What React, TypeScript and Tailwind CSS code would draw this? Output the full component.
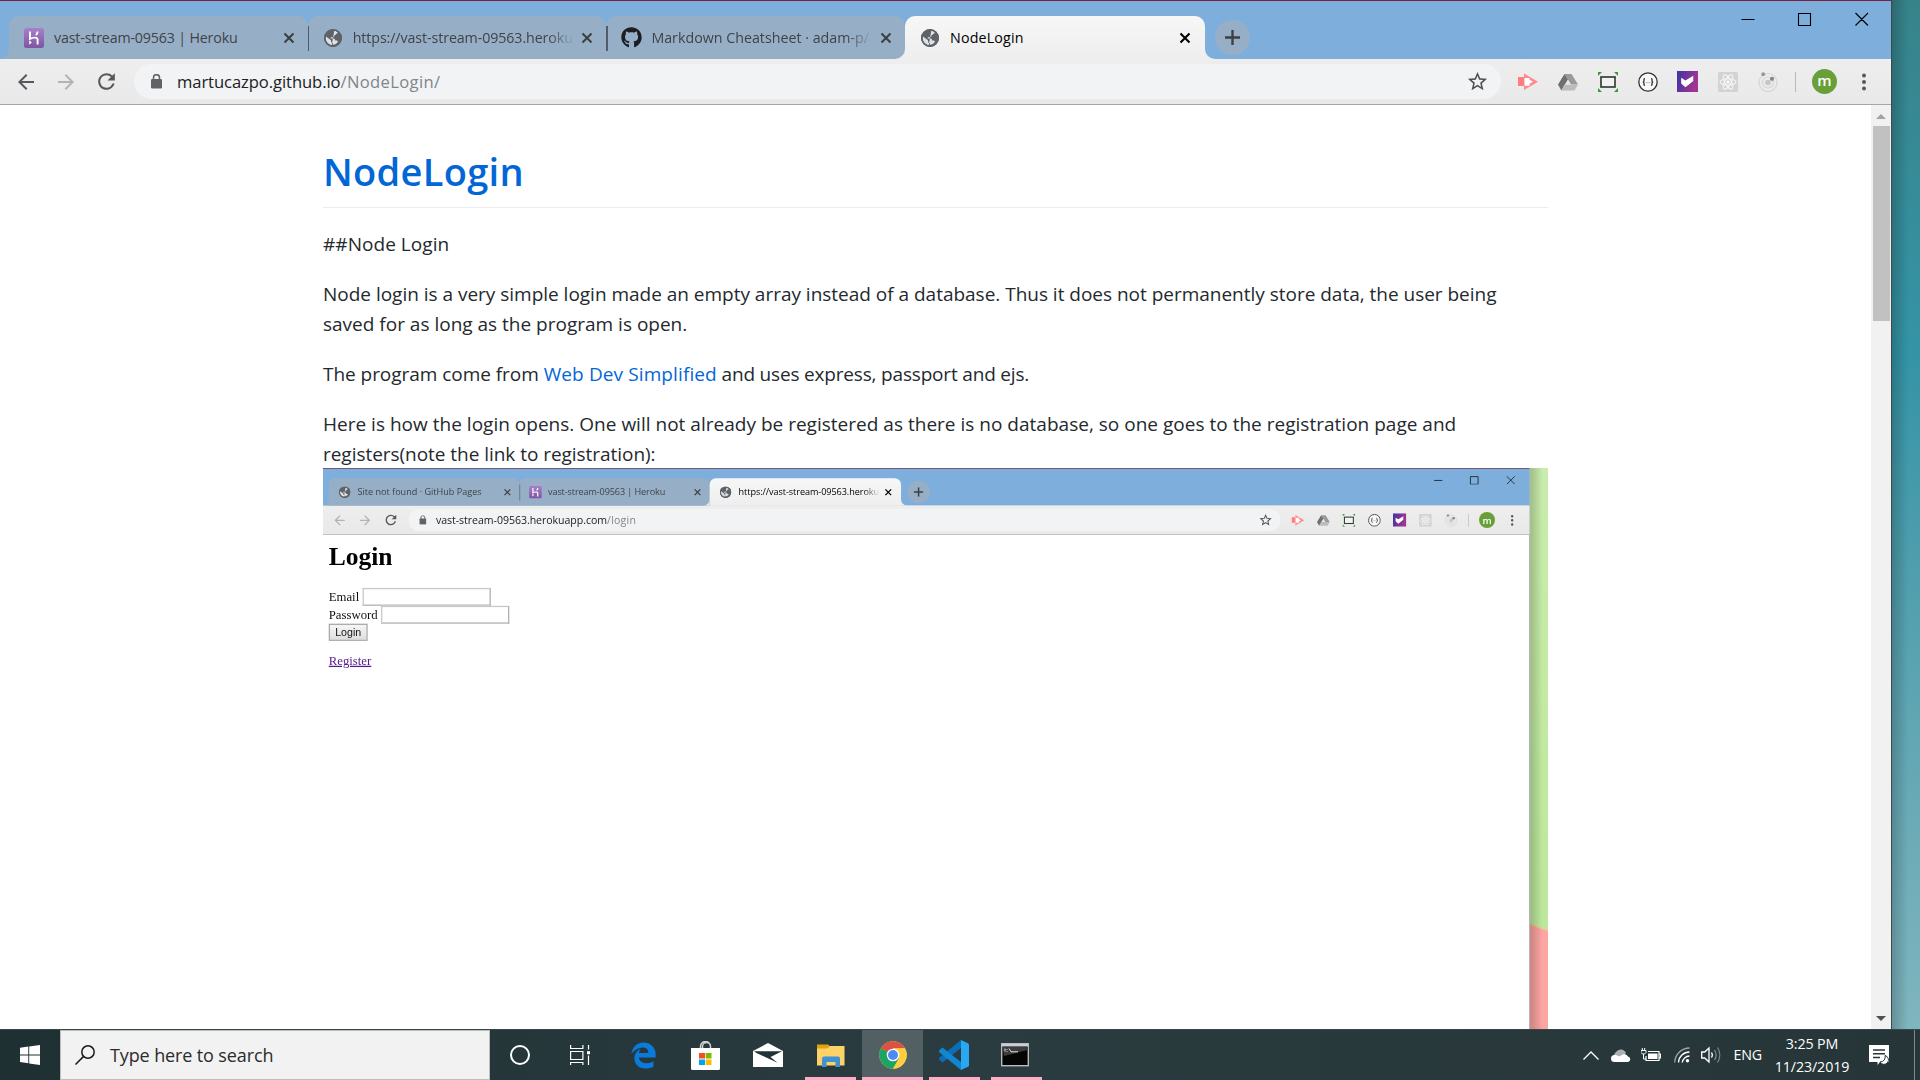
import React from "react";
import { MdArrowBack, MdArrowForward, MdRefresh, MdStarBorder } from "react-icons/md";
import { FaEdgeLegacy, FaGithub } from "react-icons/fa";

function Globe() {
  return (
    <svg viewBox="0 0 18 18" className="size-[18px]">
      <circle cx="9" cy="9" r="9" fill="#5f6368" />
      <path
        d="M10.300 1.800c1.200.2 2.600.8 3.600 1.800-.3.900-.9 1.400-2 1.500-.2 1-.9 1.300-1.700 1.500.3 1-.3 1.500-1.200 1.600H6.800l-.1 1.400h2.800c1.100 0 1.600.7 1.600 1.800h1.100c.9 0 1.500.5 1.700 1.300-1.100 1.800-3 2.900-5.100 3v-1.700c-1.100 0-1.800-.7-1.800-1.800v-.9L2 7.600A7.300 7.300 0 0 0 1.700 9c0 3.600 2.600 6.600 6 7.200"
        fill="#dfe3e7"
      />
      <circle cx="9" cy="9" r="8.200" fill="none" stroke="#5f6368" strokeWidth="1.600" />
    </svg>
  );
}

function Lock() {
  return (
    <svg viewBox="0 0 11 15" className="h-[15px] w-[11px] text-[#5f6368]">
      <rect y="5" width="11" height="9.500" rx="1.200" fill="currentColor" />
      <path d="M2.500 6V3.700a3 3 0 0 1 6 0V6" fill="none" stroke="currentColor" strokeWidth="1.500" />
    </svg>
  );
}

function Heroku() {
  return (
    <svg viewBox="0 0 20 20" className="size-5">
      <defs>
        <linearGradient id="hk" x1="0" y1="0" x2="0" y2="1">
          <stop offset="0" stopColor="#a97fc9" />
          <stop offset="1" stopColor="#7d55a3" />
        </linearGradient>
      </defs>
      <rect width="20" height="20" rx="2.500" fill="url(#hk)" />
      <path d="M6 3.400v7.400c2-.9 6.900-2.300 7.600.4v5.400M13.600 3.400c0 1.500-.7 2.700-1.700 3.700" fill="none" stroke="#fff" strokeWidth="1.900" />
      <path d="M5.200 12.300l2.600 2.200-2.600 2.200z" fill="#fff" />
    </svg>
  );
}

function Cross({ active }: { active?: boolean }) {
  return (
    <svg viewBox="0 0 12 12" className={active ? "size-3 text-black" : "size-3 text-[#3c4043]"}>
      <path d="M1.500 1.500l9 9M10.500 1.500l-9 9" stroke="currentColor" strokeWidth="2.100" />
    </svg>
  );
}

type TabData = {
  icon: React.ReactNode;
  title: string;
  tracking?: string;
  active?: boolean;
  sep?: boolean;
  fade?: boolean;
  flare?: boolean;
};

function Tab({ icon, title, tracking = "", active, sep, fade, flare }: TabData) {
  return (
    <div
      className={
        "relative flex h-[43px] shrink-0 items-center rounded-t-[10px] pl-[14px] " +
        (active
          ? "z-10 w-[300px] bg-linear-to-b from-[#f7f7f7] to-[#eeeeee] pr-[14px] text-black"
          : "w-[298.700px] bg-[#97afc6] pr-[13px] text-[#3f4347]")
      }
    >
      {(active || flare) && (
        <svg viewBox="0 0 10 10" className={"absolute -left-[10px] bottom-0 size-[10px] " + (active ? "text-[#eeeeee]" : "text-[#97afc6]")}>
          <path d="M10 0v10H0a10 10 0 0 0 10-10z" fill="currentColor" />
        </svg>
      )}
      {active && (
        <svg viewBox="0 0 10 10" className="absolute -right-[10px] bottom-0 size-[10px] text-[#eeeeee]">
          <path d="M0 0v10h10a10 10 0 0 1-10-10z" fill="currentColor" />
        </svg>
      )}
      <span className="flex w-[22px] justify-center">{icon}</span>
      <span
        className={
          "ml-[9px] w-[222px] whitespace-pre text-[14.250px] leading-5 " + tracking + (fade ? " mask-r-from-88% mask-r-to-100%" : "")
        }
      >
        {title}
      </span>
      <span className="ml-auto">
        <Cross active={active} />
      </span>
      {sep && <span className="absolute -right-[1.500px] top-[10px] z-10 h-[25px] w-[1.600px] bg-[#4f5d6b]" />}
    </div>
  );
}

function Extensions() {
  return (
    <>
      <svg viewBox="0 0 20 20" className="size-5">
        <path d="M0 5h6v9H0z" fill="#ff7f7f" />
        <path d="M6 1.500L20 9.800 6 18z" fill="#ff8a8a" />
        <path d="M6.500 6h5v1.800l3.500 2-3.500 2v2h-5z" fill="#fff" />
      </svg>
      <svg viewBox="0 0 20 20" className="size-5">
        <path d="M6.500 2h7L20 12.500h-7z" fill="#9a9a9a" />
        <path d="M6.500 2L0 12.500 3.300 18.500 10 7.500z" fill="#6f6f6f" />
        <path d="M6.500 12.500H20l-3.500 6H3.300z" fill="#bcbcbc" />
        <path d="M10 7.800l2.800 4.700H7.200z" fill="#e6e6e6" />
      </svg>
      <svg viewBox="0 0 20 20" className="size-5">
        <rect x="3" y="5" width="14" height="10" fill="#f2f2f2" stroke="#37413c" strokeWidth="1.700" />
        <path d="M0 0h4L0 4zM20 0v4l-4-4zM0 20v-4l4 4zM20 20h-4l4-4z" fill="#3a9a35" />
      </svg>
      <svg viewBox="0 0 20 20" className="size-5">
        <circle cx="10" cy="10" r="9.200" fill="#f8f8f8" stroke="#333" strokeWidth="1.300" />
        <path
          d="M7 6.600c-1.300 0-1 1-1 1.900s-.3 1.500-1.200 1.500c.9 0 1.200.6 1.200 1.500s-.3 1.900 1 1.900M13 6.600c1.300 0 1 1 1 1.900s.3 1.500 1.200 1.500c-.9 0-1.200.6-1.200 1.500s.3 1.900-1 1.900"
          fill="none"
          stroke="#333"
          strokeWidth="1.300"
        />
        <path d="M7.800 10.500h.8M9.600 10.500h.8M11.400 10.500h.8" stroke="#777" strokeWidth="0.900" />
      </svg>
      <svg viewBox="0 0 20 20" className="-mx-[0.500px] size-[21px]">
        <defs>
          <linearGradient id="pv" x1="0" y1="0" x2="1" y2="0.300">
            <stop offset="0" stopColor="#3f32a6" />
            <stop offset="1" stopColor="#a23590" />
          </linearGradient>
        </defs>
        <rect width="20" height="20" fill="url(#pv)" />
        <path d="M4 6.500l4 2.500 7.500-4.500v5L8 15.500 4 12z" fill="#fff" />
      </svg>
      <svg viewBox="0 0 20 20" className="size-5">
        <rect width="20" height="20" rx="1.500" fill="#d3d3d3" />
        <g fill="none" stroke="#f6f6f6" strokeWidth="1.100">
          <ellipse cx="10" cy="10" rx="8" ry="3.200" />
          <ellipse cx="10" cy="10" rx="8" ry="3.200" transform="rotate(60 10 10)" />
          <ellipse cx="10" cy="10" rx="8" ry="3.200" transform="rotate(120 10 10)" />
        </g>
        <circle cx="10" cy="10" r="1.800" fill="#f6f6f6" />
      </svg>
      <svg viewBox="0 0 20 20" className="size-5">
        <g fill="none" stroke="#d6d6d6" strokeWidth="1.200">
          <circle cx="10" cy="10.500" r="9" />
          <circle cx="10" cy="10.500" r="5.500" />
        </g>
        <circle cx="10" cy="10.500" r="2.800" fill="#c6c6c6" />
        <circle cx="5.200" cy="2.300" r="2" fill="#9a9a9a" />
        <circle cx="14" cy="6.800" r="2.100" fill="#858585" />
      </svg>
    </>
  );
}

type ChromeProps = { tabs: TabData[]; back?: boolean; domain: string; path: string };

function Chrome({ tabs, back, domain, path }: ChromeProps) {
  return (
    <div className="w-[1891px]">
      <div className="flex h-[59px] items-start border-t border-[#7a2140] bg-[#7eafdc]">
        <div className="flex pl-[9px] pt-[15px]">
          {tabs.map((t, i) => (
            <Tab key={i} {...t} />
          ))}
        </div>
        <span className="ml-[10px] mt-[19px] flex size-[35px] items-center justify-center rounded-full bg-[#97afc6]">
          <svg viewBox="0 0 14 14" className="size-[15px]">
            <path d="M7 0v14M0 7h14" stroke="#3c4043" strokeWidth="2.200" />
          </svg>
        </span>
        <svg viewBox="0 0 128 14" className="ml-auto mr-[22px] mt-[11px] h-[14px] w-32 shrink-0">
          <path d="M0.500 7.500h13M57.500 1.500h12v12h-12zM114.500 1l12.500 12.500M127 1L114.500 13.500" fill="none" stroke="#000" strokeWidth="1.100" />
        </svg>
      </div>
      <div className="flex h-[46px] items-center border-b border-[#a6a6a6] bg-linear-to-b from-[#eeeeee] to-[#e9e9e9]">
        <div className="flex w-[134px] shrink-0 items-center gap-4 pl-[14px]">
          <MdArrowBack className={back ? "size-6 text-[#55585c]" : "size-6 text-[#b3b3b3]"} />
          <MdArrowForward className="size-6 text-[#b3b3b3]" />
          <MdRefresh className="size-[25px] text-[#55585c]" />
        </div>
        <div className="flex h-[35px] w-[1367px] shrink-0 items-center rounded-full bg-[#f1f3f4] pl-[17px] pr-3">
          <Lock />
          <div className="ml-[15px] text-[16.600px] leading-6">
            <span className="tracking-[-0.080px] text-[#202124]">{domain}</span>
            <span className="tracking-[0.350px] text-[#80868b]">{path}</span>
          </div>
          <MdStarBorder className="ml-auto size-[23px] text-[#4c5054]" />
        </div>
        <div className="ml-[16.500px] flex items-center gap-5">
          <Extensions />
        </div>
        <span className="ml-[17.500px] h-5 w-px bg-[#b8b8b8]" />
        <span className="ml-4 flex size-[25px] items-center justify-center rounded-full bg-[#689f38] pb-0.5 text-[15px] font-semibold text-white">
          m
        </span>
        <svg viewBox="0 0 4 18" className="ml-[25px] h-[18px] w-1">
          <circle cx="2" cy="2.500" r="2" fill="#55585c" />
          <circle cx="2" cy="9" r="2" fill="#55585c" />
          <circle cx="2" cy="15.500" r="2" fill="#55585c" />
        </svg>
      </div>
    </div>
  );
}

const outerTabs: TabData[] = [
  { icon: <Heroku />, title: "vast-stream-09563 | Heroku", tracking: "tracking-[-0.170px]", sep: true, flare: true },
  { icon: <Globe />, title: "https://vast-stream-09563.heroku", tracking: "tracking-[-0.100px]", sep: true, fade: true },
  { icon: <FaGithub className="size-[21px] text-[#1b1f23]" />, title: "Markdown Cheatsheet · adam-p/", fade: true },
  { icon: <Globe />, title: "NodeLogin", tracking: "tracking-[0.150px]", active: true },
];

const innerTabs: TabData[] = [
  { icon: <Globe />, title: "Site not found · GitHub Pages", sep: true, flare: true },
  { icon: <Heroku />, title: "vast-stream-09563 | Heroku", tracking: "tracking-[-0.170px]" },
  { icon: <Globe />, title: "https://vast-stream-09563.heroku", tracking: "tracking-[-0.100px]", active: true, fade: true },
];

function Field({ label }: { label: string }) {
  return (
    <div className="flex items-center gap-[5px]">
      {label}
      <span className="h-[28px] w-[201px] border-2 border-[#b0b0b0] border-l-[#c8c8c8] border-t-[#c8c8c8] bg-white" />
    </div>
  );
}

function LoginShot() {
  return (
    <div className="relative flex h-[561px] w-[1225px] overflow-hidden">
      <div className="h-[1080px] w-[1920px] shrink-0 origin-top-left scale-[0.638]">
        <div className="flex h-full">
          <div className="w-[1892px] shrink-0 border-r border-[#777] bg-white">
            <Chrome tabs={innerTabs} domain="vast-stream-09563.herokuapp.com" path="/login" />
            <div className="px-[9px] pt-[11px] font-['Liberation_Serif',serif] text-[20px] leading-[27.500px] text-[#111]">
              <h1 className="text-[40px] font-bold leading-[46px] text-black">Login</h1>
              <div className="mt-[26px]">
                <Field label="Email" />
                <Field label="Password" />
              </div>
              <button className="flex h-[27px] w-[61px] items-center justify-center border-2 border-[#a8a8a8] bg-linear-to-b from-[#f6f6f6] to-[#dedede] font-['Liberation_Sans',sans-serif] text-[16.670px]">
                Login
              </button>
              <p className="mt-[18px] text-[#551a8b] underline">Register</p>
            </div>
          </div>
          <svg viewBox="0 0 28 1080" preserveAspectRatio="none" className="h-[1080px] w-7 shrink-0">
            <defs>
              <linearGradient id="gr" x1="0" y1="0" x2="0" y2="1">
                <stop offset="0" stopColor="#c8ecab" />
                <stop offset="0.600" stopColor="#bde89c" />
                <stop offset="1" stopColor="#bde89c" />
              </linearGradient>
              <linearGradient id="sh" x1="0" y1="0" x2="1" y2="0">
                <stop offset="0" stopColor="#000" stopOpacity="0.200" />
                <stop offset="0.700" stopColor="#000" stopOpacity="0" />
              </linearGradient>
            </defs>
            <rect width="28" height="1080" fill="url(#gr)" />
            <path d="M0 715l28 10v355H0z" fill="#fda5a1" />
            <path d="M0 715l28 10" stroke="#f3c98e" strokeWidth="2" />
            <rect width="28" height="1080" fill="url(#sh)" />
          </svg>
        </div>
      </div>
    </div>
  );
}

function Scrollbar() {
  return (
    <div className="flex w-5 shrink-0 flex-col items-center bg-[#f1f1f1]">
      <svg viewBox="0 0 10 5" className="mt-[9px] h-[5px] w-[10px]">
        <path d="M5 0l5 5H0z" fill="#a3a3a3" />
      </svg>
      <div className="mt-[7px] h-[195px] w-[17px] bg-[#c1c1c1]" />
      <svg viewBox="0 0 10 5" className="mb-2 mt-auto h-[5px] w-[10px]">
        <path d="M5 5l5-5H0z" fill="#505050" />
      </svg>
    </div>
  );
}

function TaskIcon({ className = "", running, children }: { className?: string; running?: boolean; children: React.ReactNode }) {
  return (
    <div className={"flex h-full flex-col items-center justify-between " + className}>
      <span className="flex h-[47px] items-center pt-[3px]">{children}</span>
      {running && <span className="h-[3px] w-full bg-[#ffacc8]" />}
    </div>
  );
}

function Taskbar() {
  return (
    <div className="flex h-[51px] border-t border-[#35464a] bg-linear-to-r from-[#1e3032] via-[#2a3c3f] to-[#263538] text-white">
      <div className="flex w-[60px] items-center justify-center">
        <svg viewBox="0 0 20 20" className="size-5">
          <path d="M0 2.800l8.300-1.200v7.900H0zM9.200 1.500L20 0v9.500H9.200zM0 10.400h8.300v7.900L0 17.100zM9.200 10.400H20V20L9.200 18.400z" fill="#fff" />
        </svg>
      </div>
      <div className="flex w-[430px] items-center border border-[#bdbdbd] bg-[#f2f2f2] pl-[14px] text-[#2b2b2b]">
        <svg viewBox="0 0 20 20" className="size-5">
          <circle cx="13" cy="7" r="6.200" fill="none" stroke="#1a1a1a" strokeWidth="1.500" />
          <path d="M8.600 11.400L0.500 19.500" stroke="#1a1a1a" strokeWidth="1.500" />
        </svg>
        <span className="ml-[15px] text-[18px] tracking-[-0.120px]">Type here to search</span>
      </div>
      <div className="flex w-[60px] items-center justify-center">
        <span className="size-5 rounded-full border-[2.500px] border-white" />
      </div>
      <div className="flex w-[60px] items-center justify-center">
        <svg viewBox="0 0 20 20" className="size-5">
          <path
            d="M0.600 0v3.500h12.300V0M0.600 6.500h12.300v8H0.600zM0.600 20v-2.500h12.300V20M18.500 0v4.500M18.500 10.500V20"
            fill="none"
            stroke="#fff"
            strokeWidth="1.200"
          />
          <path d="M17 6.200h3v3h-3z" fill="#fff" />
        </svg>
      </div>
      <TaskIcon className="ml-2 w-[51px]">
        <FaEdgeLegacy className="size-[27px] text-[#0a7bdb]" />
      </TaskIcon>
      <TaskIcon className="ml-[11px] w-[51px]">
        <svg viewBox="0 0 29 29" className="size-[29px]">
          <path d="M9.500 8V5.500a5 5 0 0 1 10 0V8M11.500 8V5.500a4 4 0 0 1 8 0" fill="none" stroke="#cfd3d4" strokeWidth="1.500" />
          <path d="M0 7h29v20.500a1.500 1.500 0 0 1-1.500 1.500h-26A1.500 1.500 0 0 1 0 27.500z" fill="#fff" />
          <path d="M8 12h6v5.500H8z" fill="#f25022" />
          <path d="M14.700 12h5.800v5.500h-5.800z" fill="#7fba00" />
          <path d="M8 18.500h6V24H8z" fill="#00a4ef" />
          <path d="M14.700 18.500h5.800V24h-5.800z" fill="#ffb900" />
        </svg>
      </TaskIcon>
      <TaskIcon className="ml-[11px] w-[51px]">
        <svg viewBox="0 0 30 24" className="h-6 w-[30px]">
          <path d="M0 8L15 0l15 8v16H0z" fill="#fff" />
          <path d="M1 8.200h28L17.500 14l7 5.800L3.500 10z" fill="#1f3235" />
        </svg>
      </TaskIcon>
      <TaskIcon running className="ml-3 w-[51px]">
        <svg viewBox="0 0 28 24" className="h-6 w-7">
          <path d="M0 1.500h11L14 4v3H0z" fill="#e3a10c" />
          <path d="M0 5.500h10L13 3h14.500v19.500H0z" fill="#fdd267" />
          <path d="M5 24V15.500a2 2 0 0 1 2-2h14a2 2 0 0 1 2 2V24h-4.500v-5h-9v5z" fill="#3f92d4" />
        </svg>
      </TaskIcon>
      <TaskIcon running className="ml-[6px] w-[61px] bg-[#536063]">
        <svg viewBox="0 0 28 28" className="size-7">
          <circle cx="14" cy="14" r="13.700" fill="#ffcd42" />
          <path d="M14 14L2.130 7.150A13.700 13.700 0 0 1 25.900 7.200H14z" fill="#dd5144" />
          <path d="M14 14L2.130 7.150A13.700 13.700 0 0 0 14 27.700L19.900 17.400z" fill="#1da362" />
          <path d="M14 7.200h11.900a13.700 13.700 0 0 1-12 20.500L19.900 17.400z" fill="#ffcd42" />
          <circle cx="14" cy="14" r="6.300" fill="#fff" />
          <circle cx="14" cy="14" r="5" fill="#4c8bf5" />
        </svg>
      </TaskIcon>
      <TaskIcon running className="ml-[6px] w-[51px]">
        <svg viewBox="0 0 30 30" className="mr-0.5 size-[30px]">
          <path d="M22 0L22 8 3.500 22.500 0 19.500v-1.500z" fill="#0a6fb8" />
          <path d="M0 10.500L3.500 7.500 22 22v8L0 12z" fill="#1087d0" />
          <path d="M22 0l7 3.200A1.800 1.800 0 0 1 30 4.800v20.400a1.800 1.800 0 0 1-1 1.600L22 30z" fill="#28a8f0" />
        </svg>
      </TaskIcon>
      <TaskIcon running className="ml-[11px] w-[51px]">
        <svg viewBox="0 0 28 24" className="mr-[3px] h-6 w-7">
          <rect x="0.700" y="0.700" width="26.600" height="22" fill="#050505" stroke="#b9bdbf" strokeWidth="1.400" />
          <path d="M1 1h26v2.500H1z" fill="#c9cfd4" />
          <path d="M1.500 4h25v3L3 13z" fill="#3c3c3c" />
          <path d="M4 5.500v3M6 6v.8M6 8v.8M8 5.500l2 3.300h7" fill="none" stroke="#dedede" strokeWidth="1" />
        </svg>
      </TaskIcon>
      <div className="ml-auto flex items-center">
        <svg viewBox="0 0 16 9" className="h-[9px] w-4">
          <path d="M0.500 8.500L8 1l7.500 7.500" fill="none" stroke="#fff" strokeWidth="1.300" />
        </svg>
        <svg viewBox="0 0 20 13" className="ml-3 h-[13px] w-5">
          <path d="M4 9a4.500 4.500 0 0 1 1-6A6 6 0 0 1 15 3.500L12 8z" fill="#a9b1b3" />
          <path d="M3.500 13a3.500 3.500 0 0 1 0-7c2 0 3 .5 4.500 1.500L13 5a4.500 4.500 0 0 1 4 2.500A2.800 2.800 0 0 1 17 13z" fill="#fff" />
        </svg>
        <svg viewBox="0 0 20 14" className="ml-[10px] h-[14px] w-5">
          <path d="M5 8v4.500h13V3.500H7M18.500 6h1v4h-1" fill="none" stroke="#fff" strokeWidth="1.200" />
          <path d="M7 5.500h9.500v5.500H7z" fill="#fff" />
          <path d="M0 2.500h5v2L3.500 6h-2L0 4.500zM1.300 0v2.500M3.700 0v2.500M2.500 6v5H5" fill="none" stroke="#fff" strokeWidth="1" />
        </svg>
        <svg viewBox="0 0 16 16" className="ml-[13px] size-4">
          <g fill="none" strokeWidth="1.300">
            <path d="M0.700 15.500A15 15 0 0 1 15.500 1" stroke="#a0a8aa" />
            <path d="M4.500 15.500A11 11 0 0 1 15.500 5" stroke="#fff" />
            <path d="M8.200 15.500a7.500 7.500 0 0 1 7.300-6.500" stroke="#fff" />
          </g>
          <circle cx="13.500" cy="13.700" r="1.700" fill="#fff" />
        </svg>
        <svg viewBox="0 0 20 18" className="ml-[11px] h-[18px] w-5">
          <path d="M0.700 6h3L8 2v14l-4.300-4h-3z" fill="none" stroke="#fff" strokeWidth="1.300" />
          <path d="M10.500 6.500c1 1.500 1 3.500 0 5" fill="none" stroke="#fff" strokeWidth="1.300" />
          <path d="M13.500 4c2 3 2 7 0 10M16.500 1.500c3 4.500 3 10.500 0 15" fill="none" stroke="#7d888a" strokeWidth="1.300" />
        </svg>
        <span className="ml-[13px] text-[14.250px] tracking-[-0.200px]">ENG</span>
        <div className="ml-[12px] flex w-[76px] flex-col items-center whitespace-nowrap text-[14.250px] leading-[23px] tracking-[-0.100px]">
          <span>3:25 PM</span>
          <span>11/23/2019</span>
        </div>
        <svg viewBox="0 0 20 20" className="ml-[19px] size-5">
          <path d="M0 0h20v17h-9l-2.500 3v-3H0z" fill="#fff" />
          <path d="M4 5h12M4 8.800h12M4 12.500h7" stroke="#26363a" strokeWidth="1.400" />
          <path d="M16 10.500a4.500 4.500 0 1 1-5 6.500 5 5 0 0 0 5-6.500z" fill="#fff" stroke="#26363a" strokeWidth="1" />
        </svg>
        <span className="ml-[25px] mr-[5px] h-[50px] w-px bg-[#7c898b]" />
      </div>
    </div>
  );
}

export default function App() {
  return (
    <div className="flex h-[1080px] w-[1920px] flex-col overflow-hidden bg-white font-['Open_Sans','Noto_Sans',sans-serif]">
      <div className="flex h-[1029px]">
        <div className="flex w-[1892px] shrink-0 flex-col border-r border-[#3a4c50]">
          <Chrome tabs={outerTabs} back domain="martucazpo.github.io" path="/NodeLogin/" />
          <div className="flex min-h-0 flex-1">
            <div className="min-w-0 flex-1 overflow-hidden whitespace-nowrap pl-[323px] text-[19px] leading-[30px] text-[#24292e]">
              <h1 className="mt-[41px] h-[62px] w-[1225px] border-b border-[#eaecef] text-[38px] font-semibold leading-[50px] tracking-[0.300px] text-[#0366d6]">
                NodeLogin
              </h1>
              <p className="mt-[21px] tracking-[0.050px]">##Node Login</p>
              <p className="mt-5">
                <span className="tracking-[-0.015px]">
                  Node login is a very simple login made an empty array instead of a database. Thus it does not permanently store data, the user being
                </span>
                <br />
                saved for as long as the program is open.
              </p>
              <p className="mt-5">
                <span className="tracking-[-0.040px]">The program come from </span>
                <span className="tracking-[0.110px] text-[#0366d6]">Web Dev Simplified</span>
                <span className="tracking-[-0.180px]"> and uses express, passport and ejs.</span>
              </p>
              <p className="mt-5">
                <span className="tracking-[0.014px]">
                  Here is how the login opens. One will not already be registered as there is no database, so one goes to the registration page and
                </span>
                <br />
                <span className="tracking-[-0.040px]">registers(note the link to registration):</span>
              </p>
              <div className="-mt-px">
                <LoginShot />
              </div>
            </div>
            <Scrollbar />
          </div>
        </div>
        <div className="flex-1 bg-linear-to-b from-[#37838a] via-[#3494a6] via-35% to-[#7fb5be]">
          <div className="h-full w-4 bg-linear-to-r from-black/20 to-transparent" />
        </div>
      </div>
      <Taskbar />
    </div>
  );
}
